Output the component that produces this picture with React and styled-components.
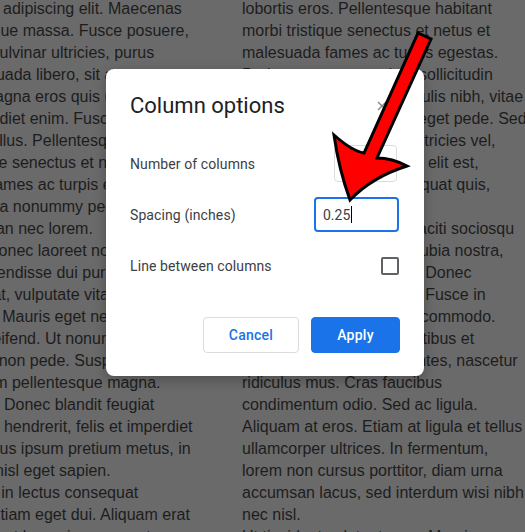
import React from "react";
import styled, { createGlobalStyle } from "styled-components";

const GlobalStyle = createGlobalStyle`
  html, body {
    margin: 0;
    padding: 0;
    background: #6a6a6a;
    overflow: hidden;
  }
`;

const Page = styled.div`
  position: relative;
  width: 525px;
  height: 532px;
  overflow: hidden;
  background: #6a6a6a;
`;

const Doc = styled.div`
  display: grid;
  grid-template-columns: 290px 290px;
  column-gap: 45px;
  margin-left: -93px;
  margin-top: -2px;
  font-family: "Liberation Sans", Arial, sans-serif;
  font-size: 16px;
  color: #1d1d1d;
`;

const Column = styled.div`
  display: flex;
  flex-direction: column;
`;

const Line = styled.div`
  height: 22px;
  line-height: 22px;
  white-space: nowrap;
`;

const Dialog = styled.div`
  position: absolute;
  top: 69px;
  left: 106px;
  width: 318px;
  box-sizing: border-box;
  padding: 23px 24px 23px;
  background: #fff;
  border-radius: 8px;
  box-shadow: 0 4px 12px rgba(0, 0, 0, 0.25);
  font-family: Roboto, "Noto Sans", sans-serif;
  display: flex;
  flex-direction: column;
`;

const Header = styled.div`
  display: flex;
  align-items: center;
  justify-content: space-between;
  height: 28px;
`;

const Title = styled.h2`
  margin: 0;
  font-size: 22px;
  font-weight: 400;
  color: #202124;
  line-height: 28px;
`;

const CloseButton = styled.div`
  width: 36px;
  height: 28px;
  display: flex;
  align-items: center;
  justify-content: center;
`;

const Options = styled.div`
  margin-top: 18px;
  display: flex;
  flex-direction: column;
`;

const Row = styled.div`
  height: 51px;
  display: flex;
  align-items: center;
  justify-content: space-between;
`;

const Label = styled.span`
  font-size: 14px;
  color: #3c4043;
  letter-spacing: 0.1px;
`;

const Select = styled.div`
  width: 63px;
  height: 37px;
  box-sizing: border-box;
  margin-right: 3px;
  border: 1px solid #dadce0;
  border-radius: 4px;
  display: flex;
  align-items: center;
  justify-content: space-between;
  padding: 0 8px 0 12px;
  font-size: 14px;
  color: #3c4043;
`;

const Caret = styled.span`
  width: 0;
  height: 0;
  border-left: 5px solid transparent;
  border-right: 5px solid transparent;
  border-top: 5px solid #5f6368;
`;

const TextInput = styled.div`
  width: 85px;
  height: 35px;
  box-sizing: border-box;
  margin-right: 1px;
  border: 2px solid #1a73e8;
  border-radius: 4px;
  display: flex;
  align-items: center;
  padding-left: 7px;
  font-size: 14px;
  color: #3c4043;
`;

const Cursor = styled.span`
  display: inline-block;
  width: 1px;
  height: 17px;
  background: #000;
  margin-left: 1px;
`;

const Checkbox = styled.div`
  width: 18px;
  height: 18px;
  box-sizing: border-box;
  margin-right: 1px;
  border: 2px solid #5f6368;
  border-radius: 2px;
`;

const Footer = styled.div`
  margin-top: 26px;
  display: flex;
  justify-content: flex-end;
  gap: 12px;
`;

const Button = styled.button`
  height: 36px;
  width: ${(p) => p.$w}px;
  box-sizing: border-box;
  border-radius: 4px;
  font-family: Roboto, "Noto Sans", sans-serif;
  font-size: 14px;
  font-weight: 500;
  letter-spacing: 0.25px;
  cursor: pointer;
  border: 1px solid ${(p) => (p.$primary ? "#1a73e8" : "#dadce0")};
  background: ${(p) => (p.$primary ? "#1a73e8" : "#fff")};
  color: ${(p) => (p.$primary ? "#fff" : "#1a73e8")};
`;

const ArrowLayer = styled.svg`
  position: absolute;
  left: 0;
  top: 0;
  pointer-events: none;
`;

const leftLines = [
  "consectetuer adipiscing elit. Maecenas",
  "porttitor congue massa. Fusce posuere,",
  "magna sed pulvinar ultricies, purus",
  "lectus malesuada libero, sit amet",
  "commodo magna eros quis urna. Nunc",
  "viverra imperdiet enim. Fusce est.",
  "Vivamus a tellus. Pellentesque habitant",
  "morbi tristique senectus et netus et",
  "malesuada fames ac turpis egestas.",
  "Proin pharetra nonummy pede. Mauris",
  "et orci. Aenean nec lorem.",
  "In porttitor. Donec laoreet nonummy",
  "augue. Suspendisse dui purus,",
  "scelerisque at, vulputate vitae, pretium",
  "mattis, nunc. Mauris eget neque at sem",
  "venenatis eleifend. Ut nonummy. Fusce",
  "aliquet pede non pede. Suspendisse",
  "dapibus lorem pellentesque magna.",
  "Integer nulla. Donec blandit feugiat",
  "ligula. Donec hendrerit, felis et imperdiet",
  "euismod, purus ipsum pretium metus, in",
  "lacinia nulla nisl eget sapien.",
  "Donec ut est in lectus consequat",
  "consequat. Etiam eget dui. Aliquam erat",
  "volutpat. Sed at lorem in nunc porta",
];

const rightLines = [
  "lobortis eros. Pellentesque habitant",
  "morbi tristique senectus et netus et",
  "malesuada fames ac turpis egestas.",
  "Proin semper, ante vitae sollicitudin",
  "posuere, metus quam iaculis nibh, vitae",
  "scelerisque nunc massa eget pede. Sed",
  "velit urna, interdum vel, ultricies vel,",
  "faucibus at, quam. Donec elit est,",
  "consectetuer eget, consequat quis,",
  "tempus quis, wisi.",
  "In in nunc. Class aptent taciti sociosqu",
  "ad litora torquent per conubia nostra,",
  "per inceptos hymenaeos. Donec",
  "ullamcorper fringilla eros. Fusce in",
  "sapien eu purus dapibus commodo.",
  "Cum sociis natoque penatibus et",
  "magnis dis parturient montes, nascetur",
  "ridiculus mus. Cras faucibus",
  "condimentum odio. Sed ac ligula.",
  "Aliquam at eros. Etiam at ligula et tellus",
  "ullamcorper ultrices. In fermentum,",
  "lorem non cursus porttitor, diam urna",
  "accumsan lacus, sed interdum wisi nibh",
  "nec nisl.",
  "Ut tincidunt volutpat urna. Mauris",
];

function App() {
  return (
    <Page>
      <GlobalStyle />
      <Doc>
        <Column>
          {leftLines.map((l, i) => (
            <Line key={i}>{l}</Line>
          ))}
        </Column>
        <Column>
          {rightLines.map((l, i) => (
            <Line key={i}>{l}</Line>
          ))}
        </Column>
      </Doc>

      <Dialog>
        <Header>
          <Title>Column options</Title>
          <CloseButton>
            <svg width="10" height="10" viewBox="0 0 10 10">
              <path d="M1 1 L9 9 M9 1 L1 9" stroke="#80868b" strokeWidth="1.4" />
            </svg>
          </CloseButton>
        </Header>
        <Options>
          <Row>
            <Label>Number of columns</Label>
            <Select>
              2
              <Caret />
            </Select>
          </Row>
          <Row>
            <Label>Spacing (inches)</Label>
            <TextInput>
              0.25
              <Cursor />
            </TextInput>
          </Row>
          <Row>
            <Label>Line between columns</Label>
            <Checkbox />
          </Row>
        </Options>
        <Footer>
          <Button $w={96}>Cancel</Button>
          <Button $w={89} $primary>
            Apply
          </Button>
        </Footer>
      </Dialog>

      <ArrowLayer width="525" height="532" viewBox="0 0 525 532">
        <path
          d="M350 200 Q339 170 334 135 Q352 151 364 153 L418 33 L431 39 L377 158 Q392 158 407 166 Q372 177 350 200 Z"
          fill="#ff0000"
          stroke="#000"
          strokeWidth="3"
          strokeLinejoin="miter"
        />
      </ArrowLayer>
    </Page>
  );
}

export default App;
